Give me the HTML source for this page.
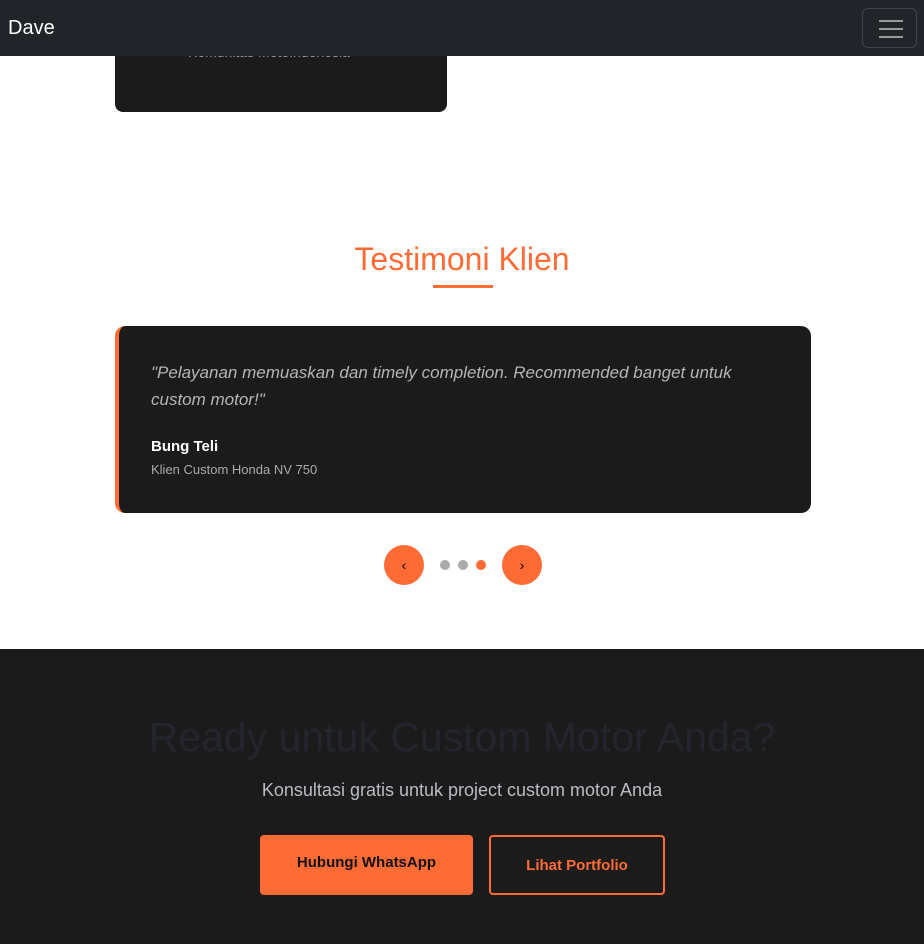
<!DOCTYPE html>
<html><head><style>
*{box-sizing:border-box;margin:0;padding:0}
body{width:924px;height:944px;overflow:hidden;background:#fff;font-family:"Liberation Sans",sans-serif;position:relative}
.nav{position:absolute;top:0;left:0;width:924px;height:56px;background:#212529;z-index:2}
.brand{position:absolute;left:8px;top:17px;color:#fff;font-size:20px}
.tog{position:absolute;left:862px;top:8px;width:55px;height:40px;border:1px solid #42464b;border-radius:6px}
.tog i{position:absolute;left:16px;width:24px;height:2px;background:#999}
.topcard{position:absolute;left:115px;top:20px;width:332px;height:92px;background:#1b1b1b;border-radius:8px}
.topcard span{position:absolute;left:73px;top:24px;color:#999;font-size:14px}
h2{position:absolute;top:241px;width:924px;text-align:center;color:#ff6b35;font-size:32px;font-weight:normal}
.ul{position:absolute;left:433px;top:285px;width:60px;height:3px;background:#ff6b35}
.card{position:absolute;left:115px;top:326px;width:696px;height:187px;background:#1b1b1b;border-radius:10px;border-left:4px solid #ff6b35}
.q{position:absolute;left:32px;top:33px;width:620px;color:#b5b5b5;font-style:italic;font-size:17px;line-height:27px}
.n{position:absolute;left:32px;top:112px;color:#fff;font-weight:bold;font-size:15px}
.r{position:absolute;left:32px;top:136px;color:#aaa;font-size:13px}
.btn{position:absolute;top:545px;width:40px;height:40px;border-radius:50%;background:#ff6b35;color:#000;text-align:center;line-height:40px;font-size:14px}
.dot{position:absolute;top:560px;width:10px;height:10px;border-radius:50%;background:#aaa}
.foot{position:absolute;top:649px;left:0;width:924px;height:295px;background:#1b1b1b}
.h3{position:absolute;top:714px;width:924px;text-align:center;color:#22252b;font-size:41px}
.sub{position:absolute;top:780px;width:924px;text-align:center;color:#b8bcc2;font-size:18px}
.b1{position:absolute;left:260px;top:835px;width:213px;height:60px;background:#ff6b35;border-radius:4px;color:#111;font-weight:bold;font-size:15px;text-align:center;line-height:56px}
.b2{position:absolute;left:489px;top:835px;width:176px;height:60px;border:2px solid #ff6b35;border-radius:4px;color:#ff6b35;font-weight:bold;font-size:15px;text-align:center;line-height:58px}
</style></head><body>
<div class="nav"><div class="brand">Dave</div><div class="tog"><i style="top:11px"></i><i style="top:19px"></i><i style="top:27px"></i></div></div>
<div class="topcard"><span>Komunitas MotoIndonesia</span></div>
<h2>Testimoni Klien</h2><div class="ul"></div>
<div class="card"><div class="q">"Pelayanan memuaskan dan timely completion. Recommended banget untuk custom motor!"</div><div class="n">Bung Teli</div><div class="r">Klien Custom Honda NV 750</div></div>
<div class="btn" style="left:384px">‹</div>
<div class="dot" style="left:440px"></div><div class="dot" style="left:458px"></div><div class="dot" style="left:476px;background:#ff6b35"></div>
<div class="btn" style="left:502px">›</div>
<div class="foot"></div>
<div class="h3">Ready untuk Custom Motor Anda?</div>
<div class="sub">Konsultasi gratis untuk project custom motor Anda</div>
<div class="b1">Hubungi WhatsApp</div>
<div class="b2">Lihat Portfolio</div>
</body></html>
